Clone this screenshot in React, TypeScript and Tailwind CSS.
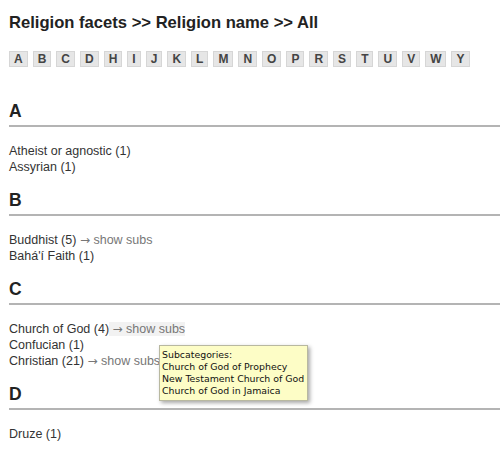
import React from "react";

const letters = ["A","B","C","D","H","I","J","K","L","M","N","O","P","R","S","T","U","V","W","Y"];

type Item = { name: string; subs?: boolean; hover?: boolean };
const sections: { letter: string; items: Item[] }[] = [
  { letter: "A", items: [{ name: "Atheist or agnostic (1)" }, { name: "Assyrian (1)" }] },
  { letter: "B", items: [{ name: "Buddhist (5)", subs: true }, { name: "Bahá'í Faith (1)" }] },
  { letter: "C", items: [{ name: "Church of God (4)", subs: true, hover: true }, { name: "Confucian (1)" }, { name: "Christian (21)", subs: true }] },
  { letter: "D", items: [{ name: "Druze (1)" }] },
];

export default function App() {
  return (
    <div className="relative w-[500px] h-[455px] overflow-hidden bg-white pl-[9px] pt-[13px] font-['Liberation_Sans',Arial,sans-serif]">
      <h1 className="text-[16.6px] leading-[20px] font-bold text-[#222]">Religion facets &gt;&gt; Religion name &gt;&gt; All</h1>
      <div className="mt-[18px] flex gap-[5px]">
        {letters.map((l) => (
          <span key={l} className="h-[16px] px-[4px] border border-[#d6d6d6] bg-[#e6e6e6] text-[12px] leading-[14px] font-bold text-[#444]">{l}</span>
        ))}
      </div>
      <div className="mt-[34px]">
        {sections.map((s) => (
          <div key={s.letter} className="mb-[15px]">
            <h2 className="text-[17.5px] leading-[20px] font-bold text-[#222] pb-[4px] border-b-2 border-[#b4b4b4]">{s.letter}</h2>
            <div className="mt-[16px] text-[12.5px] leading-[16px] text-[#333]">
              {s.items.map((it) => (
                <div key={it.name}>
                  {it.name}
                  {it.subs && (
                    <span className={"text-[#777] " + (it.hover ? "bg-[#f2f2f2]" : "")}>
                      {" "}
                      <span className="font-['DejaVu_Sans',sans-serif] text-[12px]">→</span> show subs
                    </span>
                  )}
                </div>
              ))}
            </div>
          </div>
        ))}
      </div>
      <div className="absolute left-[159px] top-[345px] whitespace-nowrap border border-[#b8b8a0] bg-[#fdfdc6] pl-[2px] pr-[3px] py-[3px] shadow-[2px_2px_4px_rgba(0,0,0,0.35)] font-['DejaVu_Sans',sans-serif] text-[9.4px] leading-[12px] text-[#111]">
        <div>Subcategories:</div>
        <div>Church of God of Prophecy</div>
        <div>New Testament Church of God</div>
        <div>Church of God in Jamaica</div>
      </div>
    </div>
  );
}
